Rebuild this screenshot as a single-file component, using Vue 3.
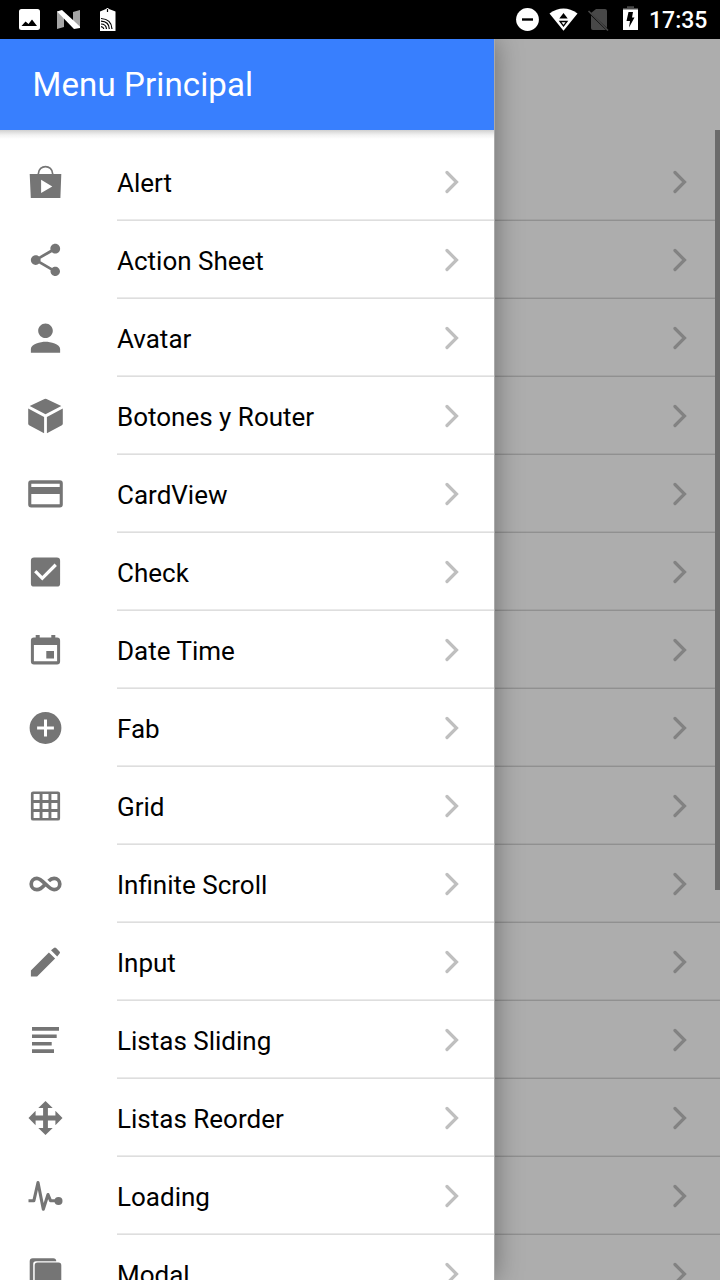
<script setup>
const items = [
  ['Alert', 'bag'], ['Action Sheet', 'share'], ['Avatar', 'person'], ['Botones y Router', 'cube'],
  ['CardView', 'card'], ['Check', 'check'], ['Date Time', 'date'], ['Fab', 'add'], ['Grid', 'grid'],
  ['Infinite Scroll', 'infinite'], ['Input', 'pencil'], ['Listas Sliding', 'list'],
  ['Listas Reorder', 'move'], ['Loading', 'pulse'], ['Modal', 'albums'],
]

// Filled shapes, drawn around the centre of a 39-unit box.
const shapes = {
  bag: 'M-15.8-8H15.8L14.9 16H-14.7ZM-4.4-2.2V11L6.8 4.4Z',
  cube: 'M-1-17Q0-17.6 1-17L15.8-9.9 0-1.7-15.8-9.9ZM-17.3-7.4-1.4 1V17.2L-16.4 9.2Q-17.3 8.7-17.3 7.8ZM17.3-7.4 1.4 1V17.2L16.4 9.2Q17.3 8.7 17.3 7.8Z',
  card: 'M-14.3-13.7H14.3Q17.3-13.7 17.3-10.7V10.5Q17.3 13.5 14.3 13.5H-14.3Q-17.3 13.5-17.3 10.5V-10.7Q-17.3-13.7-14.3-13.7ZM-14.2-10.3V-7H14.2V-10.3ZM-14.2 0V10.2H14.2V0Z',
  check: 'M-11.4-14.6H11.4Q14.6-14.6 14.6-11.4V11.4Q14.6 14.6 11.4 14.6H-11.4Q-14.6 14.6-14.6 11.4V-11.4Q-14.6-14.6-11.4-14.6ZM-3.2 8.5 11.4-6.1 9.1-8.4-3.2 3.9-9.1-2-11.4.3Z',
  date: 'M-9.8-15H-5.8V-12.4H5.8V-15H9.8V-12.4H11.6Q14.6-12.2 14.6-9.4V11.6Q14.6 14.6 11.6 14.6H-11.6Q-14.6 14.6-14.6 11.6V-9.4Q-14.6-12.2-11.6-12.4H-9.8ZM-11.6-5V11.3H11.6V-5ZM.8 1H8.5V8.6H.8Z',
  add: 'M0-15.9A15.9 15.9 0 1 1 0 15.9 15.9 15.9 0 0 1 0-15.9ZM-1.5-8.4V-1.5H-8.4V1.5H-1.5V8.4H1.5V1.5H8.4V-1.5H1.5V-8.4Z',
  grid: 'M-12.4-14.6H12.4Q14.6-14.6 14.6-12.4V12.4Q14.6 14.6 12.4 14.6H-12.4Q-14.6 14.6-14.6 12.4V-12.4Q-14.6-14.6-12.4-14.6Z' +
    [-11.9, -3, 5.9].flatMap(x => [-11.9, -3, 5.9].map(y => `M${x} ${y}v6h6v-6z`)).join(''),
  pencil: 'M-14.6 8.4V14.6H-8.4L9.6-3.4 3.4-9.6ZM5.5-11.7 8.4-14.1Q9.5-15 10.6-14L14-10.6Q15-9.5 14.1-8.4L11.7-5.5Z',
  list: 'M-13.5-12.9H13.5V-9.3H-13.5ZM-13.5-5.5H11.2V-1.9H-13.5ZM-13.5 1.9H6.2V5.5H-13.5ZM-13.5 9.3H8.5V12.9H-13.5Z',
  move: 'M0-17 7.2-9.9H2.4V-2.4H9.9V-7.2L17 0 9.9 7.2V2.4H2.4V9.9H7.2L0 17-7.2 9.9H-2.4V2.4H-9.9V7.2L-17 0-9.9-7.2V-2.4H-2.4V-9.9H-7.2Z',
  albums: 'M-12.8-15.8H7.8Q10.6-15.8 10.8-12.8H-9.5Q-12.3-12.8-12.3-10V13Q-15.8 13-15.8 10V-12.8Q-15.8-15.8-12.8-15.8ZM-8-11.4H13Q15.8-11.4 15.8-8.6V15.8H-10.8V-8.6Q-10.8-11.4-8-11.4Z',
}
</script>

<template>
  <div class="screen">
    <header class="status">
      <svg class="left" viewBox="0 0 130 39">
        <path fill="#fff" fill-rule="evenodd" d="M21.5 9H37.500Q40 9 40 11.500V27.500Q40 30 37.500 30H21.500Q19 30 19 27.500V11.500Q19 9 21.500 9ZM21.500 26H37L32 19.500 28.500 24 25.500 21.500Z" />
        <path fill="#a5a5a5" d="M57 11 64 17V27L57 29ZM80 10V27L73 21V12Z" />
        <path fill="#fff" d="M57 11.500 62 10 80 26.500V28L74 29Z" />
        <path fill="#fff" d="M100 11.500 106 9Q107.500 7 109 9L115.500 11.500V31H100Z" />
        <path d="M107.500 9V12" stroke="#000" stroke-width="1.200" />
        <path fill="none" stroke="#000" stroke-width="1.200" d="M101 18.500Q111.500 19 112 29M101 21.200Q109 21.500 109.300 29M101 24Q106 24 106.500 29M101 26.700Q103.500 27 103.800 29" />
      </svg>
      <div class="right">
        <svg class="sys" viewBox="510 0 134 39">
          <circle cx="527.500" cy="19.500" r="11.400" fill="#fff" />
          <path d="M522 19.500H533" stroke="#000" stroke-width="2.400" />
          <path fill="#fff" d="M549.500 13.500Q563.500 3.500 577.500 13.500L563.500 30.800Z" />
          <path d="M559.300 18.500 563.500 13 567.700 18.500Z" />
          <path d="M560 21.500H567L563.500 26Z" fill="#fff" stroke="#000" stroke-width="1.300" />
          <path fill="#484848" d="M596 9H605Q607 9 607 11V28L591 13ZM591 15.500 606 30H593Q591 30 591 28Z" />
          <path d="M588.500 11 608 30.500" stroke="#484848" stroke-width="1.600" />
          <path fill="#484848" d="M627 6.300H634V8H638V10H623V8H627Z" />
          <path fill="#fff" d="M623 9.500H638V30H623Z" />
          <path d="M628.500 12H633L632 17.500H634.500L629 27.500 630 21H626.500Z" />
        </svg>
        <span class="clock">17:35</span>
      </div>
    </header>

    <main class="body">
      <div class="page">
        <div v-for="item in items" :key="item[0]" class="page-row">
          <svg class="chevron" viewBox="0 0 14 24"><path d="M2 2.500 11.500 12 2 21.500" /></svg>
        </div>
        <div class="scrollbar"></div>
      </div>

      <aside class="drawer">
        <h1 class="title">Menu Principal</h1>
        <nav class="menu">
          <div v-for="[label, icon] in items" :key="label" class="item">
            <svg v-if="icon === 'share'" class="icon" viewBox="0 0 24 24">
              <path d="M18 16.080c-.76 0-1.440.3-1.960.77L8.910 12.700c.05-.23.09-.46.09-.7s-.04-.47-.09-.7l7.050-4.110c.54.5 1.250.81 2.040.81 1.660 0 3-1.340 3-3s-1.340-3-3-3-3 1.340-3 3c0 .24.04.47.09.7L8.040 9.810C7.500 9.310 6.790 9 6 9c-1.660 0-3 1.340-3 3s1.340 3 3 3c.79 0 1.500-.31 2.040-.81l7.120 4.160c-.05.21-.08.43-.08.65 0 1.610 1.310 2.920 2.920 2.920s2.920-1.310 2.920-2.920-1.310-2.920-2.920-2.920z" />
            </svg>
            <svg v-else-if="icon === 'person'" class="icon" viewBox="0 0 512 512">
              <path d="M256 256c52.800 0 96-43.200 96-96s-43.200-96-96-96-96 43.200-96 96 43.200 96 96 96zm0 48c-63.598 0-192 32.402-192 96v48h384v-48c0-63.598-128.402-96-192-96z" />
            </svg>
            <svg v-else class="icon" viewBox="-19.5 -20 39 40">
              <path v-if="shapes[icon]" :d="shapes[icon]" fill-rule="evenodd" />
              <path v-if="icon === 'bag'" class="line thin" d="M-7.200-8C-6.800-17.800 6.800-17.800 7.200-8" />
              <path v-if="icon === 'infinite'" class="line infinite" d="M3.200-3C5-4.900 6.300-5.700 8.600-5.700A5.700 5.700 0 0 1 8.600 5.700C3 5.700-3-5.700-8.600-5.700A5.700 5.700 0 0 0-8.600 5.700C-5.500 5.700-3.800 4.300-.5.500" />
              <path v-if="icon === 'pulse'" class="line" d="M-17 4.700H-11.600L-7.500-13.500-2.200 13.200 2.500-1.500 5 4.700H12" />
              <circle v-if="icon === 'pulse'" cx="13" cy="4.900" r="4" />
            </svg>
            <div class="label">
              <span>{{ label }}</span>
              <svg class="chevron" viewBox="0 0 14 24"><path d="M2 2.500 11.500 12 2 21.500" /></svg>
            </div>
          </div>
        </nav>
      </aside>
    </main>
  </div>
</template>

<style>
body { margin: 0; overflow: hidden; }
</style>

<style scoped>
.screen {
  width: 720px;
  height: 1280px;
  display: flex;
  flex-direction: column;
  overflow: hidden;
  font-family: Roboto, sans-serif;
}
.status {
  height: 39px;
  flex: none;
  background: #000;
  display: flex;
  justify-content: space-between;
}
.left { width: 130px; height: 39px; }
.right { width: 210px; display: flex; }
.sys { width: 134px; height: 39px; flex: none; }
.clock {
  color: #fff;
  font-size: 23px;
  font-weight: 500;
  line-height: 41px;
  margin-left: 5px;
}
.body {
  flex: 1;
  min-height: 0;
  display: grid;
  grid-template-columns: 494px 226px;
  overflow: hidden;
  background: #adadad;
}
.page {
  grid-area: 1 / 1 / 2 / 3;
  position: relative;
  padding-top: 104px;
  min-height: 0;
}
.page-row {
  height: 78px;
  display: flex;
  justify-content: flex-end;
  align-items: center;
  padding-right: 33.4px;
  box-sizing: border-box;
  box-shadow: inset 0 -1px #909090, inset 0 -2px #a1a1a1;
}
.chevron {
  width: 14px;
  height: 24px;
  flex: none;
  fill: none;
  stroke: #bfbfbf;
  stroke-width: 3.2;
  stroke-linecap: round;
}
.page .chevron { stroke: #828282; }
.scrollbar {
  position: absolute;
  right: 0;
  top: 91px;
  width: 5px;
  height: 760px;
  background: #6b6b6b;
}
.drawer {
  grid-area: 1 / 1 / 2 / 2;
  position: relative;
  height: 1241px;
  overflow: visible;
  background: #fff;
  box-shadow: 1px 0 0 #aaa, 0 0 26px rgba(0, 0, 0, .4);
}
.title {
  margin: 0;
  height: 91px;
  box-sizing: border-box;
  padding-left: 32.5px;
  background: #387ffe;
  color: #fff;
  font-size: 33px;
  font-weight: 400;
  letter-spacing: .12px;
  line-height: 92px;
}
.menu {
  height: 1150px;
  box-sizing: border-box;
  padding-top: 13px;
  overflow: hidden;
  background: linear-gradient(#d0d0d0, #dedede 2px, #f2f2f2 5px, #fff 9px);
}
.item { height: 78px; display: flex; align-items: center; padding-left: 26px; }
.icon { width: 39px; height: 40px; flex: none; fill: #757575; }
.line { fill: none; stroke: #757575; stroke-width: 3.1; stroke-linejoin: round; }
.thin { stroke-width: 1.7; }
.infinite { stroke-width: 3.7; }
.label {
  flex: 1;
  height: 78px;
  margin-left: 52px;
  padding-right: 35px;
  display: flex;
  align-items: center;
  justify-content: space-between;
  box-sizing: border-box;
  font-size: 26px;
  color: #000;
  box-shadow: inset 0 -1px #dedede, inset 0 -2px #eaeaea;
}
.label span { position: relative; top: 1px; }
</style>
